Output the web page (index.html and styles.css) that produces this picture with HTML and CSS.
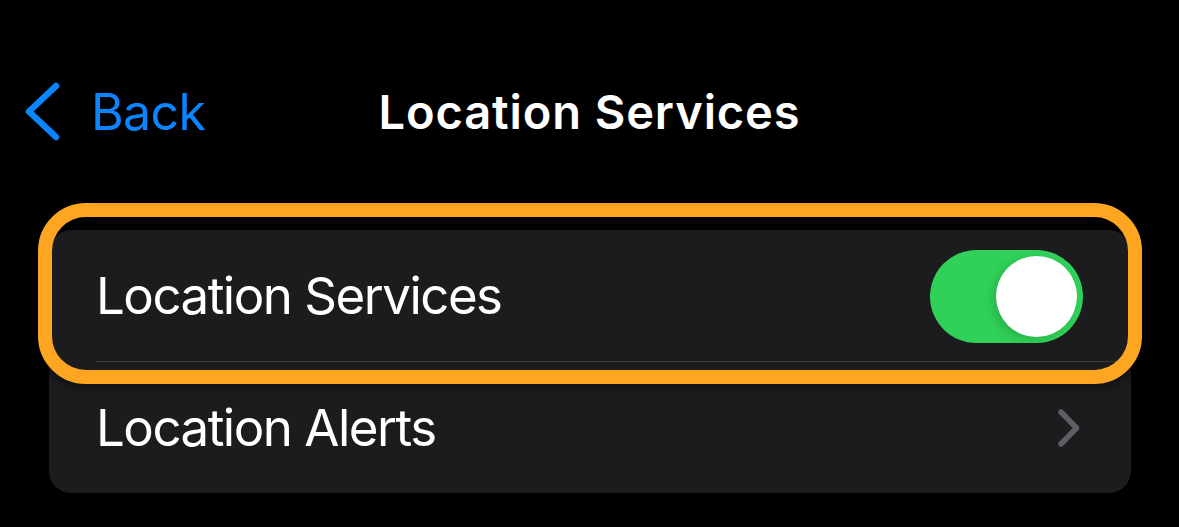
FILE: index.html
```html
<!DOCTYPE html>
<html lang="en">
<head>
<meta charset="utf-8">
<title>Location Services</title>
<link rel="stylesheet" href="styles.css">
</head>
<body>
<div class="screen">
  <header class="nav">
    <a class="back" href="#">
      <svg class="back-icon" width="40" height="60" viewBox="0 0 40 60" aria-hidden="true">
        <polyline points="31,4 4,29.5 31,55" fill="none" stroke="#0A84FF" stroke-width="6.5" stroke-linecap="round" stroke-linejoin="round"/>
      </svg>
      <span class="back-label">Back</span>
    </a>
    <h1 class="title">Location Services</h1>
    <div class="nav-spacer"></div>
  </header>

  <section class="group">
    <div class="row row-first">
      <span class="row-label">Location Services</span>
      <span class="switch on"><span class="knob"></span></span>
    </div>
    <div class="row">
      <span class="row-label">Location Alerts</span>
      <svg class="chevron" width="24" height="38" viewBox="0 0 24 38" aria-hidden="true">
        <polyline points="4,3 19.5,19 4,35" fill="none" stroke="#5E5E63" stroke-width="5.5" stroke-linecap="round" stroke-linejoin="round"/>
      </svg>
    </div>
    <div class="highlight"></div>
  </section>
</div>
</body>
</html>
```

FILE: styles.css
```css
html, body {
  margin: 0;
  padding: 0;
  background: #000;
}

.screen {
  width: 1179px;
  height: 527px;
  background: #000;
  font-family: Inter, "Noto Sans", "Liberation Sans", sans-serif;
  color: #fff;
  overflow: hidden;
}

.nav {
  display: grid;
  grid-template-columns: 1fr auto 1fr;
  align-items: center;
  height: 60px;
  padding-top: 81px;
}

.back {
  display: flex;
  align-items: center;
  gap: 26px;
  padding-left: 25px;
  color: #0A84FF;
  text-decoration: none;
  font-size: 50px;
  font-weight: 400;
  letter-spacing: -0.6px;
}

.back-icon {
  display: block;
  margin-top: 1px;
}

.back-label {
  line-height: 60px;
}

.title {
  margin: 0;
  font-size: 47px;
  font-weight: 600;
  letter-spacing: 0.9px;
  line-height: 60px;
  text-align: center;
}

.group {
  position: relative;
  margin: 89px 48px 0 49px;
  background: #1C1C1E;
  border-radius: 22px;
}

.row {
  position: relative;
  display: flex;
  align-items: center;
  justify-content: space-between;
  height: 131px;
  padding: 0 50px 0 47px;
}

.row-first {
  height: 132px;
  padding-right: 48px;
}

.row-first::after {
  content: "";
  position: absolute;
  left: 47px;
  right: 0;
  bottom: 0;
  height: 1px;
  background: #3A3A3D;
}

.row-label {
  font-size: 51px;
  font-weight: 400;
  letter-spacing: -1.5px;
  line-height: 60px;
}

.switch {
  display: flex;
  align-items: center;
  justify-content: flex-end;
  width: 153px;
  height: 93px;
  padding: 0 6px;
  box-sizing: border-box;
  border-radius: 47px;
  background: #30D158;
}

.knob {
  width: 81px;
  height: 81px;
  border-radius: 50%;
  background: #fff;
  box-shadow: -4px 3px 10px rgba(0, 0, 0, 0.15);
}

.chevron {
  display: block;
}

.highlight {
  position: absolute;
  left: -11px;
  top: -27px;
  width: 1104px;
  height: 181px;
  box-sizing: border-box;
  border: 14px solid #FEA622;
  border-radius: 48px;
  box-shadow: 0 4px 8px rgba(0, 0, 0, 0.45);
  pointer-events: none;
}
```
